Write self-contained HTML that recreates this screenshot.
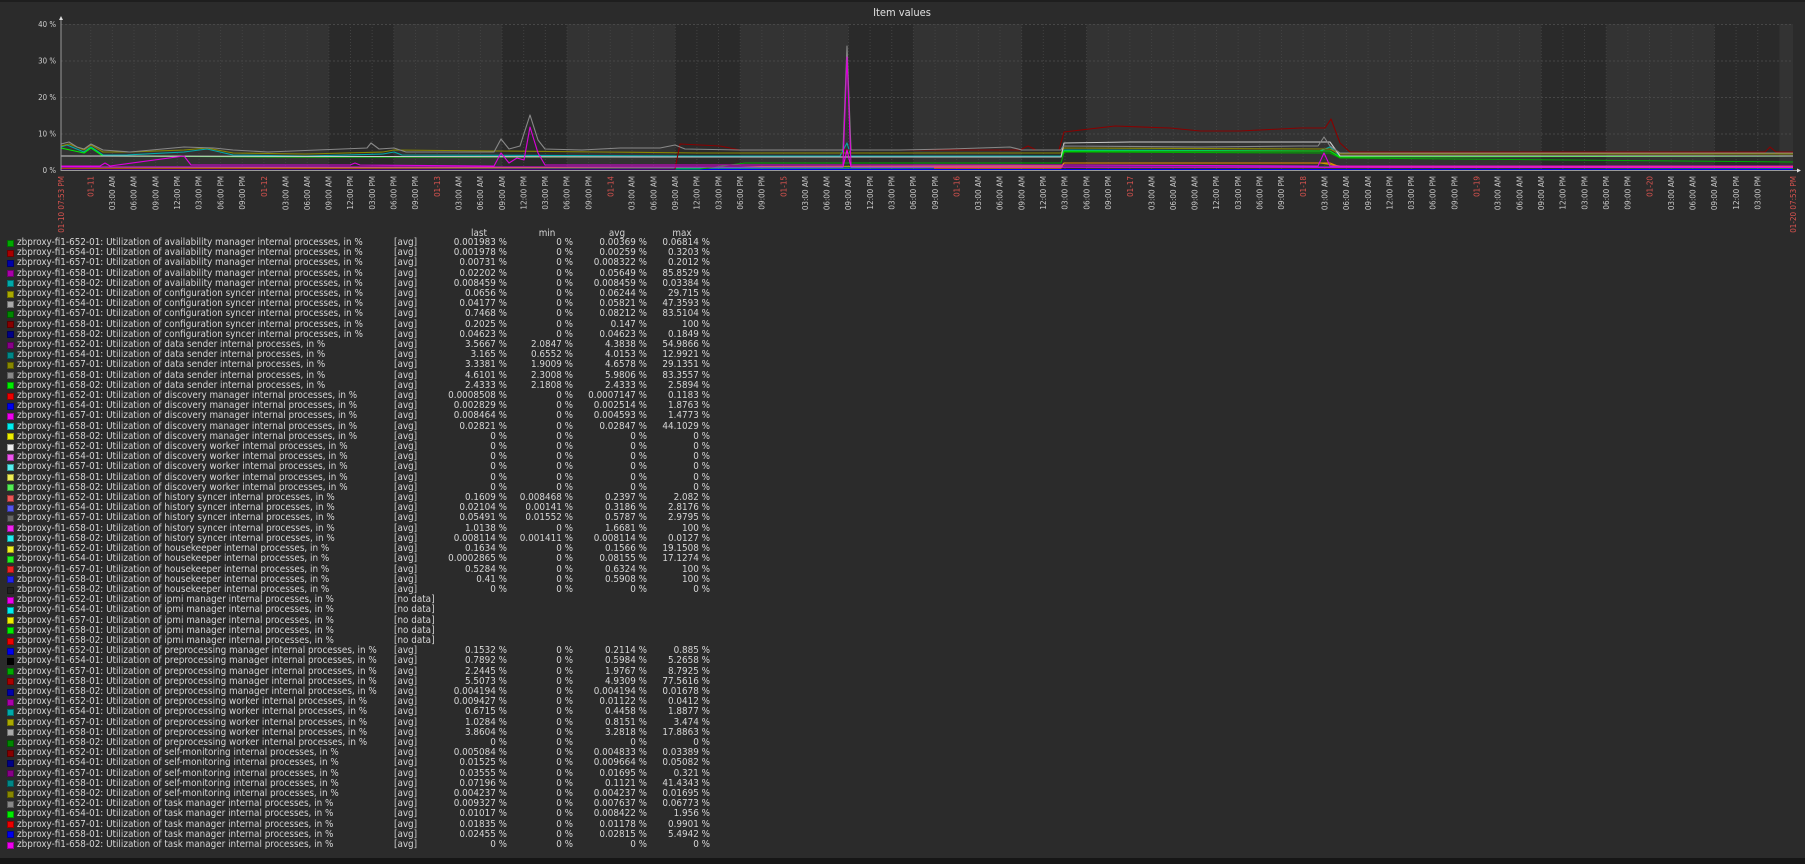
<!DOCTYPE html>
<html><head><meta charset="utf-8"><style>
*{margin:0;padding:0;box-sizing:border-box}
body{width:1805px;height:864px;background:#2b2b2b;overflow:hidden;position:relative;font-family:"DejaVu Sans Condensed","DejaVu Sans","Liberation Sans",sans-serif;color:#d6d6d6}
#top{position:absolute;left:0;top:0;width:1805px;height:2px;background:#1e1e1e}
#bot{position:absolute;left:0;top:858px;width:1805px;height:6px;background:#161616}
svg{position:absolute;left:0;top:0}
#lg{position:absolute;left:0;top:238px;width:720px;font-size:9.8px;line-height:10.21px}
.r{height:10.21px;position:relative;white-space:nowrap}
.r i{position:absolute;left:7px;top:1.6px;width:7px;height:7px;border:1px solid rgba(0,0,0,.35)}
.r b{font-weight:normal;position:absolute;left:17px}
.r u{text-decoration:none;position:absolute;left:394px}
.r s{text-decoration:none;position:absolute;text-align:right}
.a{left:430px;width:77px}.m{left:510px;width:63px}.v{left:575px;width:72px}.x{left:650px;width:60px}
#hd{position:absolute;top:228px;font-size:9.8px;left:0;width:720px;height:10px}
#hd span{position:absolute;text-align:center;width:40px}
</style></head><body>
<div id="top"></div>
<svg width="1805" height="240" viewBox="0 0 1805 240" font-family="DejaVu Sans Condensed, DejaVu Sans, sans-serif">
<text x="902" y="16" fill="#e0e0e0" font-size="11" text-anchor="middle">Item values</text>
<rect x="61" y="24" width="1732" height="146.5" fill="#333333"/>
<g fill="#2a2a2a">
<rect x="328.85" y="24" width="64.95" height="146.5"/><rect x="502.05" y="24" width="64.95" height="146.5"/><rect x="675.25" y="24" width="64.95" height="146.5"/><rect x="848.45" y="24" width="64.95" height="146.5"/><rect x="1021.65" y="24" width="64.95" height="146.5"/><rect x="1541.25" y="24" width="64.95" height="146.5"/><rect x="1714.45" y="24" width="64.95" height="146.5"/>
</g>
<g stroke="#474747" stroke-width="1" stroke-dasharray="2,2">
<line x1="61" y1="24.5" x2="1793" y2="24.5"/><line x1="61" y1="61" x2="1793" y2="61"/><line x1="61" y1="97.5" x2="1793" y2="97.5"/><line x1="61" y1="134" x2="1793" y2="134"/>
</g>
<g stroke="#424242" stroke-width="1" stroke-dasharray="1,2">
<path d="M90.7 24V170M112.35 24V170M134 24V170M155.65 24V170M177.3 24V170M198.95 24V170M220.6 24V170M242.25 24V170M263.9 24V170M285.55 24V170M307.2 24V170M328.85 24V170M350.5 24V170M372.15 24V170M393.8 24V170M415.45 24V170M437.1 24V170M458.75 24V170M480.4 24V170M502.05 24V170M523.7 24V170M545.35 24V170M567 24V170M588.65 24V170M610.3 24V170M631.95 24V170M653.6 24V170M675.25 24V170M696.9 24V170M718.55 24V170M740.2 24V170M761.85 24V170M783.5 24V170M805.15 24V170M826.8 24V170M848.45 24V170M870.1 24V170M891.75 24V170M913.4 24V170M935.05 24V170M956.7 24V170M978.35 24V170M1000 24V170M1021.65 24V170M1043.3 24V170M1064.95 24V170M1086.6 24V170M1108.25 24V170M1129.9 24V170M1151.55 24V170M1173.2 24V170M1194.85 24V170M1216.5 24V170M1238.15 24V170M1259.8 24V170M1281.45 24V170M1303.1 24V170M1324.75 24V170M1346.4 24V170M1368.05 24V170M1389.7 24V170M1411.35 24V170M1433 24V170M1454.65 24V170M1476.3 24V170M1497.95 24V170M1519.6 24V170M1541.25 24V170M1562.9 24V170M1584.55 24V170M1606.2 24V170M1627.85 24V170M1649.5 24V170M1671.15 24V170M1692.8 24V170M1714.45 24V170M1736.1 24V170M1757.75 24V170"/>
</g>
<g fill="none" stroke-width="1.1" stroke-linejoin="round">
<polyline stroke="#0000ee" points="61,169.5 1793,169.5"/>
<polyline stroke="#00aaaa" points="61,168.5 900,168 1061,167 1330,167 1793,168"/>
<polyline stroke="#aaaa00" points="61,168.5 300,168 740,167 760,166.5 1061,166 1064,163 1320,163 1340,166 1793,166"/>
<polyline stroke="#ee8800" points="934,168 1061,168 1064,163 1330,163 1340,167 1793,167"/>
<polyline stroke="#00aa00" points="61,169 700,169 745,163 1061,163 1064,152 1330,153 1340,158 1793,162"/>
<polyline stroke="#00aaaa" points="61,147 67,145 84,152 91,147 103,155 126,155 184,152 207,149 233,155 306,156 383,154 394,152 402,155 700,156 840,156 847,143 851,156 1061,156 1064,150 1320,151 1330,147 1340,156 1793,156"/>
<polyline stroke="#888800" points="61,146 69,144 84,150 91,145 103,152 130,152 184,150 207,148 233,153 306,154 383,152 394,150 600,152 700,153 1061,153 1064,148 1330,149 1340,154 1793,154"/>
<polyline stroke="#00ee00" points="61,148 84,153 91,148 103,156 300,157 700,157 1061,157 1064,151 1330,151 1340,157 1793,156"/>
<polyline stroke="#cccccc" points="61,156 700,157 1061,157 1064,143 1130,142 1330,142 1340,156 1793,156"/>
<polyline stroke="#880000" points="61,169 675,169 680,144 720,146 740,150 1020,150 1028,146 1036,150 1059,150 1064,132 1115,126 1170,128 1200,131 1240,131 1300,128 1325,128 1331,119 1340,143 1350,152 1765,152 1770,147 1776,152 1793,152"/>
<polyline stroke="#888888" points="61,144 69,142 77,147 84,149 91,144 103,150 130,152 184,147 214,148 233,150 268,152 367,148 371,143 379,149 394,148 406,152 494,152 501,139 509,149 520,146 530,115 538,140 545,149 582,150 620,148 660,148 675,145 685,149 740,150 843,150 847,46 851,150 900,150 950,149 1010,147 1022,150 1061,150 1063,146 1200,147 1300,146 1318,146 1324,137 1330,146 1340,153 1793,153"/>
<polyline stroke="#dd00dd" points="61,166 100,166 105,163 110,166 184,156 191,165 350,165 355,163 360,165 494,166 501,153 509,163 517,158 524,160 530,127 538,153 545,165 843,165 847,57 851,165 1061,165 1318,166 1324,153 1330,166 1793,166"/>
<polyline stroke="#ee00ee" points="61,167 843,167 847,150 851,167 1793,167.5"/>
</g>
<g stroke="#9a9a9a" stroke-width="1"><line x1="61" y1="19" x2="61" y2="171"/><line x1="61" y1="170.5" x2="1798" y2="170.5"/></g>
<path d="M61 16 L59 20 L63 20Z M1801 170.5 L1797 168.5 L1797 172.5Z" fill="#ddd"/>
<g fill="#cfcfcf" font-size="7.8" text-anchor="end">
<text x="56" y="27">40 %</text><text x="56" y="63.5">30 %</text><text x="56" y="100">20 %</text><text x="56" y="136.5">10 %</text><text x="56" y="173">0 %</text>
</g>
<g transform="rotate(-90)" font-size="8" text-anchor="end" fill="#c8c8c8">
<g fill="#d9534f">
<text x="-176" y="64">01-10 07:53 PM</text><text x="-176" y="1796">01-20 07:53 PM</text>
<text x="-176" y="93.7">01-11</text><text x="-176" y="266.9">01-12</text><text x="-176" y="440.1">01-13</text><text x="-176" y="613.3">01-14</text><text x="-176" y="786.5">01-15</text><text x="-176" y="959.7">01-16</text><text x="-176" y="1132.9">01-17</text><text x="-176" y="1306.1">01-18</text><text x="-176" y="1479.3">01-19</text><text x="-176" y="1652.5">01-20</text>
</g>
<text x="-176" y="115.05">03:00 AM</text><text x="-176" y="136.7">06:00 AM</text><text x="-176" y="158.35">09:00 AM</text><text x="-176" y="180">12:00 PM</text><text x="-176" y="201.65">03:00 PM</text><text x="-176" y="223.3">06:00 PM</text><text x="-176" y="244.95">09:00 PM</text>
<text x="-176" y="288.25">03:00 AM</text><text x="-176" y="309.9">06:00 AM</text><text x="-176" y="331.55">09:00 AM</text><text x="-176" y="353.2">12:00 PM</text><text x="-176" y="374.85">03:00 PM</text><text x="-176" y="396.5">06:00 PM</text><text x="-176" y="418.15">09:00 PM</text>
<text x="-176" y="461.45">03:00 AM</text><text x="-176" y="483.1">06:00 AM</text><text x="-176" y="504.75">09:00 AM</text><text x="-176" y="526.4">12:00 PM</text><text x="-176" y="548.05">03:00 PM</text><text x="-176" y="569.7">06:00 PM</text><text x="-176" y="591.35">09:00 PM</text>
<text x="-176" y="634.65">03:00 AM</text><text x="-176" y="656.3">06:00 AM</text><text x="-176" y="677.95">09:00 AM</text><text x="-176" y="699.6">12:00 PM</text><text x="-176" y="721.25">03:00 PM</text><text x="-176" y="742.9">06:00 PM</text><text x="-176" y="764.55">09:00 PM</text>
<text x="-176" y="807.85">03:00 AM</text><text x="-176" y="829.5">06:00 AM</text><text x="-176" y="851.15">09:00 AM</text><text x="-176" y="872.8">12:00 PM</text><text x="-176" y="894.45">03:00 PM</text><text x="-176" y="916.1">06:00 PM</text><text x="-176" y="937.75">09:00 PM</text>
<text x="-176" y="981.05">03:00 AM</text><text x="-176" y="1002.7">06:00 AM</text><text x="-176" y="1024.35">09:00 AM</text><text x="-176" y="1046">12:00 PM</text><text x="-176" y="1067.65">03:00 PM</text><text x="-176" y="1089.3">06:00 PM</text><text x="-176" y="1110.95">09:00 PM</text>
<text x="-176" y="1154.25">03:00 AM</text><text x="-176" y="1175.9">06:00 AM</text><text x="-176" y="1197.55">09:00 AM</text><text x="-176" y="1219.2">12:00 PM</text><text x="-176" y="1240.85">03:00 PM</text><text x="-176" y="1262.5">06:00 PM</text><text x="-176" y="1284.15">09:00 PM</text>
<text x="-176" y="1327.45">03:00 AM</text><text x="-176" y="1349.1">06:00 AM</text><text x="-176" y="1370.75">09:00 AM</text><text x="-176" y="1392.4">12:00 PM</text><text x="-176" y="1414.05">03:00 PM</text><text x="-176" y="1435.7">06:00 PM</text><text x="-176" y="1457.35">09:00 PM</text>
<text x="-176" y="1500.65">03:00 AM</text><text x="-176" y="1522.3">06:00 AM</text><text x="-176" y="1543.95">09:00 AM</text><text x="-176" y="1565.6">12:00 PM</text><text x="-176" y="1587.25">03:00 PM</text><text x="-176" y="1608.9">06:00 PM</text><text x="-176" y="1630.55">09:00 PM</text>
<text x="-176" y="1673.85">03:00 AM</text><text x="-176" y="1695.5">06:00 AM</text><text x="-176" y="1717.15">09:00 AM</text><text x="-176" y="1738.8">12:00 PM</text><text x="-176" y="1760.45">03:00 PM</text>
</g>
</svg>
<div id="hd"><span style="left:459px">last</span><span style="left:527px">min</span><span style="left:597px">avg</span><span style="left:662px">max</span></div>
<div id="lg">
<div class="r"><i style="background:#00aa00"></i><b>zbproxy-fi1-652-01: Utilization of availability manager internal processes, in %</b><u>[avg]</u><s class="a">0.001983 %</s><s class="m">0 %</s><s class="v">0.00369 %</s><s class="x">0.06814 %</s></div>
<div class="r"><i style="background:#aa0000"></i><b>zbproxy-fi1-654-01: Utilization of availability manager internal processes, in %</b><u>[avg]</u><s class="a">0.001978 %</s><s class="m">0 %</s><s class="v">0.00259 %</s><s class="x">0.3203 %</s></div>
<div class="r"><i style="background:#0000aa"></i><b>zbproxy-fi1-657-01: Utilization of availability manager internal processes, in %</b><u>[avg]</u><s class="a">0.00731 %</s><s class="m">0 %</s><s class="v">0.008322 %</s><s class="x">0.2012 %</s></div>
<div class="r"><i style="background:#aa00aa"></i><b>zbproxy-fi1-658-01: Utilization of availability manager internal processes, in %</b><u>[avg]</u><s class="a">0.02202 %</s><s class="m">0 %</s><s class="v">0.05649 %</s><s class="x">85.8529 %</s></div>
<div class="r"><i style="background:#00aaaa"></i><b>zbproxy-fi1-658-02: Utilization of availability manager internal processes, in %</b><u>[avg]</u><s class="a">0.008459 %</s><s class="m">0 %</s><s class="v">0.008459 %</s><s class="x">0.03384 %</s></div>
<div class="r"><i style="background:#aaaa00"></i><b>zbproxy-fi1-652-01: Utilization of configuration syncer internal processes, in %</b><u>[avg]</u><s class="a">0.0656 %</s><s class="m">0 %</s><s class="v">0.06244 %</s><s class="x">29.715 %</s></div>
<div class="r"><i style="background:#aaaaaa"></i><b>zbproxy-fi1-654-01: Utilization of configuration syncer internal processes, in %</b><u>[avg]</u><s class="a">0.04177 %</s><s class="m">0 %</s><s class="v">0.05821 %</s><s class="x">47.3593 %</s></div>
<div class="r"><i style="background:#008800"></i><b>zbproxy-fi1-657-01: Utilization of configuration syncer internal processes, in %</b><u>[avg]</u><s class="a">0.7468 %</s><s class="m">0 %</s><s class="v">0.08212 %</s><s class="x">83.5104 %</s></div>
<div class="r"><i style="background:#880000"></i><b>zbproxy-fi1-658-01: Utilization of configuration syncer internal processes, in %</b><u>[avg]</u><s class="a">0.2025 %</s><s class="m">0 %</s><s class="v">0.147 %</s><s class="x">100 %</s></div>
<div class="r"><i style="background:#000088"></i><b>zbproxy-fi1-658-02: Utilization of configuration syncer internal processes, in %</b><u>[avg]</u><s class="a">0.04623 %</s><s class="m">0 %</s><s class="v">0.04623 %</s><s class="x">0.1849 %</s></div>
<div class="r"><i style="background:#880088"></i><b>zbproxy-fi1-652-01: Utilization of data sender internal processes, in %</b><u>[avg]</u><s class="a">3.5667 %</s><s class="m">2.0847 %</s><s class="v">4.3838 %</s><s class="x">54.9866 %</s></div>
<div class="r"><i style="background:#008888"></i><b>zbproxy-fi1-654-01: Utilization of data sender internal processes, in %</b><u>[avg]</u><s class="a">3.165 %</s><s class="m">0.6552 %</s><s class="v">4.0153 %</s><s class="x">12.9921 %</s></div>
<div class="r"><i style="background:#888800"></i><b>zbproxy-fi1-657-01: Utilization of data sender internal processes, in %</b><u>[avg]</u><s class="a">3.3381 %</s><s class="m">1.9009 %</s><s class="v">4.6578 %</s><s class="x">29.1351 %</s></div>
<div class="r"><i style="background:#888888"></i><b>zbproxy-fi1-658-01: Utilization of data sender internal processes, in %</b><u>[avg]</u><s class="a">4.6101 %</s><s class="m">2.3008 %</s><s class="v">5.9806 %</s><s class="x">83.3557 %</s></div>
<div class="r"><i style="background:#00ee00"></i><b>zbproxy-fi1-658-02: Utilization of data sender internal processes, in %</b><u>[avg]</u><s class="a">2.4333 %</s><s class="m">2.1808 %</s><s class="v">2.4333 %</s><s class="x">2.5894 %</s></div>
<div class="r"><i style="background:#ee0000"></i><b>zbproxy-fi1-652-01: Utilization of discovery manager internal processes, in %</b><u>[avg]</u><s class="a">0.0008508 %</s><s class="m">0 %</s><s class="v">0.0007147 %</s><s class="x">0.1183 %</s></div>
<div class="r"><i style="background:#0000ee"></i><b>zbproxy-fi1-654-01: Utilization of discovery manager internal processes, in %</b><u>[avg]</u><s class="a">0.002829 %</s><s class="m">0 %</s><s class="v">0.002514 %</s><s class="x">1.8763 %</s></div>
<div class="r"><i style="background:#ee00ee"></i><b>zbproxy-fi1-657-01: Utilization of discovery manager internal processes, in %</b><u>[avg]</u><s class="a">0.008464 %</s><s class="m">0 %</s><s class="v">0.004593 %</s><s class="x">1.4773 %</s></div>
<div class="r"><i style="background:#00eeee"></i><b>zbproxy-fi1-658-01: Utilization of discovery manager internal processes, in %</b><u>[avg]</u><s class="a">0.02821 %</s><s class="m">0 %</s><s class="v">0.02847 %</s><s class="x">44.1029 %</s></div>
<div class="r"><i style="background:#eeee00"></i><b>zbproxy-fi1-658-02: Utilization of discovery manager internal processes, in %</b><u>[avg]</u><s class="a">0 %</s><s class="m">0 %</s><s class="v">0 %</s><s class="x">0 %</s></div>
<div class="r"><i style="background:#eeeeee"></i><b>zbproxy-fi1-652-01: Utilization of discovery worker internal processes, in %</b><u>[avg]</u><s class="a">0 %</s><s class="m">0 %</s><s class="v">0 %</s><s class="x">0 %</s></div>
<div class="r"><i style="background:#ee55ee"></i><b>zbproxy-fi1-654-01: Utilization of discovery worker internal processes, in %</b><u>[avg]</u><s class="a">0 %</s><s class="m">0 %</s><s class="v">0 %</s><s class="x">0 %</s></div>
<div class="r"><i style="background:#55eeee"></i><b>zbproxy-fi1-657-01: Utilization of discovery worker internal processes, in %</b><u>[avg]</u><s class="a">0 %</s><s class="m">0 %</s><s class="v">0 %</s><s class="x">0 %</s></div>
<div class="r"><i style="background:#eeee55"></i><b>zbproxy-fi1-658-01: Utilization of discovery worker internal processes, in %</b><u>[avg]</u><s class="a">0 %</s><s class="m">0 %</s><s class="v">0 %</s><s class="x">0 %</s></div>
<div class="r"><i style="background:#55ee55"></i><b>zbproxy-fi1-658-02: Utilization of discovery worker internal processes, in %</b><u>[avg]</u><s class="a">0 %</s><s class="m">0 %</s><s class="v">0 %</s><s class="x">0 %</s></div>
<div class="r"><i style="background:#ee5555"></i><b>zbproxy-fi1-652-01: Utilization of history syncer internal processes, in %</b><u>[avg]</u><s class="a">0.1609 %</s><s class="m">0.008468 %</s><s class="v">0.2397 %</s><s class="x">2.082 %</s></div>
<div class="r"><i style="background:#5555ee"></i><b>zbproxy-fi1-654-01: Utilization of history syncer internal processes, in %</b><u>[avg]</u><s class="a">0.02104 %</s><s class="m">0.00141 %</s><s class="v">0.3186 %</s><s class="x">2.8176 %</s></div>
<div class="r"><i style="background:#666666"></i><b>zbproxy-fi1-657-01: Utilization of history syncer internal processes, in %</b><u>[avg]</u><s class="a">0.05491 %</s><s class="m">0.01552 %</s><s class="v">0.5787 %</s><s class="x">2.9795 %</s></div>
<div class="r"><i style="background:#ee22ee"></i><b>zbproxy-fi1-658-01: Utilization of history syncer internal processes, in %</b><u>[avg]</u><s class="a">1.0138 %</s><s class="m">0 %</s><s class="v">1.6681 %</s><s class="x">100 %</s></div>
<div class="r"><i style="background:#22eeee"></i><b>zbproxy-fi1-658-02: Utilization of history syncer internal processes, in %</b><u>[avg]</u><s class="a">0.008114 %</s><s class="m">0.001411 %</s><s class="v">0.008114 %</s><s class="x">0.0127 %</s></div>
<div class="r"><i style="background:#eeee22"></i><b>zbproxy-fi1-652-01: Utilization of housekeeper internal processes, in %</b><u>[avg]</u><s class="a">0.1634 %</s><s class="m">0 %</s><s class="v">0.1566 %</s><s class="x">19.1508 %</s></div>
<div class="r"><i style="background:#22ee22"></i><b>zbproxy-fi1-654-01: Utilization of housekeeper internal processes, in %</b><u>[avg]</u><s class="a">0.0002865 %</s><s class="m">0 %</s><s class="v">0.08155 %</s><s class="x">17.1274 %</s></div>
<div class="r"><i style="background:#ee2222"></i><b>zbproxy-fi1-657-01: Utilization of housekeeper internal processes, in %</b><u>[avg]</u><s class="a">0.5284 %</s><s class="m">0 %</s><s class="v">0.6324 %</s><s class="x">100 %</s></div>
<div class="r"><i style="background:#2222ee"></i><b>zbproxy-fi1-658-01: Utilization of housekeeper internal processes, in %</b><u>[avg]</u><s class="a">0.41 %</s><s class="m">0 %</s><s class="v">0.5908 %</s><s class="x">100 %</s></div>
<div class="r"><i style="background:#222222"></i><b>zbproxy-fi1-658-02: Utilization of housekeeper internal processes, in %</b><u>[avg]</u><s class="a">0 %</s><s class="m">0 %</s><s class="v">0 %</s><s class="x">0 %</s></div>
<div class="r"><i style="background:#ee00ee"></i><b>zbproxy-fi1-652-01: Utilization of ipmi manager internal processes, in %</b><u>[no data]</u></div>
<div class="r"><i style="background:#00eeee"></i><b>zbproxy-fi1-654-01: Utilization of ipmi manager internal processes, in %</b><u>[no data]</u></div>
<div class="r"><i style="background:#eeee00"></i><b>zbproxy-fi1-657-01: Utilization of ipmi manager internal processes, in %</b><u>[no data]</u></div>
<div class="r"><i style="background:#00ee00"></i><b>zbproxy-fi1-658-01: Utilization of ipmi manager internal processes, in %</b><u>[no data]</u></div>
<div class="r"><i style="background:#ee0000"></i><b>zbproxy-fi1-658-02: Utilization of ipmi manager internal processes, in %</b><u>[no data]</u></div>
<div class="r"><i style="background:#0000ee"></i><b>zbproxy-fi1-652-01: Utilization of preprocessing manager internal processes, in %</b><u>[avg]</u><s class="a">0.1532 %</s><s class="m">0 %</s><s class="v">0.2114 %</s><s class="x">0.885 %</s></div>
<div class="r"><i style="background:#000000"></i><b>zbproxy-fi1-654-01: Utilization of preprocessing manager internal processes, in %</b><u>[avg]</u><s class="a">0.7892 %</s><s class="m">0 %</s><s class="v">0.5984 %</s><s class="x">5.2658 %</s></div>
<div class="r"><i style="background:#00aa00"></i><b>zbproxy-fi1-657-01: Utilization of preprocessing manager internal processes, in %</b><u>[avg]</u><s class="a">2.2445 %</s><s class="m">0 %</s><s class="v">1.9767 %</s><s class="x">8.7925 %</s></div>
<div class="r"><i style="background:#aa0000"></i><b>zbproxy-fi1-658-01: Utilization of preprocessing manager internal processes, in %</b><u>[avg]</u><s class="a">5.5073 %</s><s class="m">0 %</s><s class="v">4.9309 %</s><s class="x">77.5616 %</s></div>
<div class="r"><i style="background:#0000aa"></i><b>zbproxy-fi1-658-02: Utilization of preprocessing manager internal processes, in %</b><u>[avg]</u><s class="a">0.004194 %</s><s class="m">0 %</s><s class="v">0.004194 %</s><s class="x">0.01678 %</s></div>
<div class="r"><i style="background:#aa00aa"></i><b>zbproxy-fi1-652-01: Utilization of preprocessing worker internal processes, in %</b><u>[avg]</u><s class="a">0.009427 %</s><s class="m">0 %</s><s class="v">0.01122 %</s><s class="x">0.0412 %</s></div>
<div class="r"><i style="background:#00aaaa"></i><b>zbproxy-fi1-654-01: Utilization of preprocessing worker internal processes, in %</b><u>[avg]</u><s class="a">0.6715 %</s><s class="m">0 %</s><s class="v">0.4458 %</s><s class="x">1.8877 %</s></div>
<div class="r"><i style="background:#aaaa00"></i><b>zbproxy-fi1-657-01: Utilization of preprocessing worker internal processes, in %</b><u>[avg]</u><s class="a">1.0284 %</s><s class="m">0 %</s><s class="v">0.8151 %</s><s class="x">3.474 %</s></div>
<div class="r"><i style="background:#aaaaaa"></i><b>zbproxy-fi1-658-01: Utilization of preprocessing worker internal processes, in %</b><u>[avg]</u><s class="a">3.8604 %</s><s class="m">0 %</s><s class="v">3.2818 %</s><s class="x">17.8863 %</s></div>
<div class="r"><i style="background:#008800"></i><b>zbproxy-fi1-658-02: Utilization of preprocessing worker internal processes, in %</b><u>[avg]</u><s class="a">0 %</s><s class="m">0 %</s><s class="v">0 %</s><s class="x">0 %</s></div>
<div class="r"><i style="background:#880000"></i><b>zbproxy-fi1-652-01: Utilization of self-monitoring internal processes, in %</b><u>[avg]</u><s class="a">0.005084 %</s><s class="m">0 %</s><s class="v">0.004833 %</s><s class="x">0.03389 %</s></div>
<div class="r"><i style="background:#000088"></i><b>zbproxy-fi1-654-01: Utilization of self-monitoring internal processes, in %</b><u>[avg]</u><s class="a">0.01525 %</s><s class="m">0 %</s><s class="v">0.009664 %</s><s class="x">0.05082 %</s></div>
<div class="r"><i style="background:#880088"></i><b>zbproxy-fi1-657-01: Utilization of self-monitoring internal processes, in %</b><u>[avg]</u><s class="a">0.03555 %</s><s class="m">0 %</s><s class="v">0.01695 %</s><s class="x">0.321 %</s></div>
<div class="r"><i style="background:#008888"></i><b>zbproxy-fi1-658-01: Utilization of self-monitoring internal processes, in %</b><u>[avg]</u><s class="a">0.07196 %</s><s class="m">0 %</s><s class="v">0.1121 %</s><s class="x">41.4343 %</s></div>
<div class="r"><i style="background:#888800"></i><b>zbproxy-fi1-658-02: Utilization of self-monitoring internal processes, in %</b><u>[avg]</u><s class="a">0.004237 %</s><s class="m">0 %</s><s class="v">0.004237 %</s><s class="x">0.01695 %</s></div>
<div class="r"><i style="background:#888888"></i><b>zbproxy-fi1-652-01: Utilization of task manager internal processes, in %</b><u>[avg]</u><s class="a">0.009327 %</s><s class="m">0 %</s><s class="v">0.007637 %</s><s class="x">0.06773 %</s></div>
<div class="r"><i style="background:#00ee00"></i><b>zbproxy-fi1-654-01: Utilization of task manager internal processes, in %</b><u>[avg]</u><s class="a">0.01017 %</s><s class="m">0 %</s><s class="v">0.008422 %</s><s class="x">1.956 %</s></div>
<div class="r"><i style="background:#ee0000"></i><b>zbproxy-fi1-657-01: Utilization of task manager internal processes, in %</b><u>[avg]</u><s class="a">0.01835 %</s><s class="m">0 %</s><s class="v">0.01178 %</s><s class="x">0.9901 %</s></div>
<div class="r"><i style="background:#0000ee"></i><b>zbproxy-fi1-658-01: Utilization of task manager internal processes, in %</b><u>[avg]</u><s class="a">0.02455 %</s><s class="m">0 %</s><s class="v">0.02815 %</s><s class="x">5.4942 %</s></div>
<div class="r"><i style="background:#ee00ee"></i><b>zbproxy-fi1-658-02: Utilization of task manager internal processes, in %</b><u>[avg]</u><s class="a">0 %</s><s class="m">0 %</s><s class="v">0 %</s><s class="x">0 %</s></div>
</div>
<div id="bot"></div>
</body></html>
